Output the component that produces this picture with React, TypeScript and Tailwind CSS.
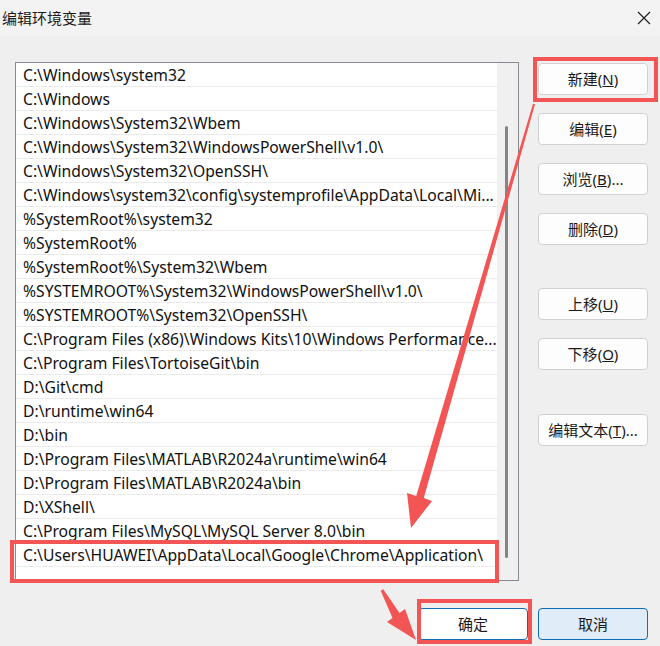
import React from "react";

const rows = [
  "C:\\Windows\\system32",
  "C:\\Windows",
  "C:\\Windows\\System32\\Wbem",
  "C:\\Windows\\System32\\WindowsPowerShell\\v1.0\\",
  "C:\\Windows\\System32\\OpenSSH\\",
  "C:\\Windows\\system32\\config\\systemprofile\\AppData\\Local\\Mi...",
  "%SystemRoot%\\system32",
  "%SystemRoot%",
  "%SystemRoot%\\System32\\Wbem",
  "%SYSTEMROOT%\\System32\\WindowsPowerShell\\v1.0\\",
  "%SYSTEMROOT%\\System32\\OpenSSH\\",
  "C:\\Program Files (x86)\\Windows Kits\\10\\Windows Performance...",
  "C:\\Program Files\\TortoiseGit\\bin",
  "D:\\Git\\cmd",
  "D:\\runtime\\win64",
  "D:\\bin",
  "D:\\Program Files\\MATLAB\\R2024a\\runtime\\win64",
  "D:\\Program Files\\MATLAB\\R2024a\\bin",
  "D:\\XShell\\",
  "C:\\Program Files\\MySQL\\MySQL Server 8.0\\bin",
  "C:\\Users\\HUAWEI\\AppData\\Local\\Google\\Chrome\\Application\\",
];

function Btn({
  label,
  k,
  suffix = "",
  className = "",
}: {
  label: string;
  k?: string;
  suffix?: string;
  className?: string;
}) {
  return (
    <div
      className={
        "w-[110px] h-[32px] rounded-[4px] border border-[#d0d0d0] bg-[#fdfdfd] flex items-center justify-center text-[15px] text-[#1a1a1a] " +
        className
      }
    >
      <span>
        {label}
        {k ? (
          <>
            (<span className="underline underline-offset-[1px]">{k}</span>)
          </>
        ) : null}
        {suffix}
      </span>
    </div>
  );
}

export default function App() {
  return (
    <div
      className="relative w-[660px] h-[646px] bg-[#efefef] overflow-hidden text-[#1a1a1a]"
      style={{ fontFamily: '"Noto Sans", "Noto Sans CJK SC", sans-serif' }}
    >
      {/* Title bar */}
      <div className="h-[36px] bg-[#f3f3f3] flex items-center justify-between pl-[2px] pr-[8px]">
        <span className="text-[15px] leading-none">编辑环境变量</span>
        <svg width="14" height="14" viewBox="0 0 14 14" className="mr-[1px]">
          <path d="M1 1 L13 13 M13 1 L1 13" stroke="#1a1a1a" strokeWidth="1.1" fill="none" />
        </svg>
      </div>

      {/* Body */}
      <div className="flex pl-[15px] pt-[26px]">
        <div className="w-[504px] h-[519px] border border-[#868a91] bg-white flex">
          <div className="w-[481px] flex flex-col">
            {rows.map((r, i) => (
              <div
                key={i}
                className="h-[24px] shrink-0 border-b border-[#ebebeb] pl-[7px] pt-[2px] flex items-center text-[15.7px] leading-none whitespace-nowrap overflow-hidden text-[#111]"
              >
                {r}
              </div>
            ))}
            <div className="flex-1" />
          </div>
          <div className="flex-1 bg-[#f0f0f0] flex flex-col items-center pt-[63px] pr-[2px]">
            <div className="w-[3px] h-[432px] rounded-full bg-[#858585]" />
          </div>
        </div>

        <div className="ml-[19px] mt-[1px] flex flex-col">
          <Btn label="新建" k="N" />
          <Btn label="编辑" k="E" className="mt-[18px]" />
          <Btn label="浏览" k="B" suffix="..." className="mt-[18px]" />
          <Btn label="删除" k="D" className="mt-[18px]" />
          <Btn label="上移" k="U" className="mt-[43px]" />
          <Btn label="下移" k="O" className="mt-[18px]" />
          <Btn label="编辑文本" k="T" suffix="..." className="mt-[44px]" />
        </div>
      </div>

      {/* Bottom buttons */}
      <div className="flex justify-end gap-[10px] pr-[12px] mt-[27px]">
        <div className="w-[110px] h-[32px] rounded-[4px] border border-[#0f6cbd] bg-white flex items-center justify-center text-[15px]">
          确定
        </div>
        <div className="w-[110px] h-[32px] rounded-[4px] border border-[#0f6cbd] bg-[#e0ecf8] flex items-center justify-center text-[15px]">
          取消
        </div>
      </div>

      {/* Annotation overlay */}
      <svg
        className="absolute inset-0 pointer-events-none"
        width="660"
        height="646"
        viewBox="0 0 660 646"
      >
        <g fill="none" stroke="#f35454" strokeWidth="4">
          <rect x="535" y="59" width="121" height="41" />
          <rect x="12" y="542" width="485" height="39" />
          <rect x="419" y="601" width="111" height="41" />
        </g>
        <g fill="#f35454">
          <polygon points="533,103.7 535,104.3 423.8,498.1 432,501 411,528 407,493 416.2,495.9" />
          <polygon points="383.3,589.3 399.5,613 405,609 416,640 387,622 392.5,618 380.7,590.7" />
        </g>
      </svg>
    </div>
  );
}
